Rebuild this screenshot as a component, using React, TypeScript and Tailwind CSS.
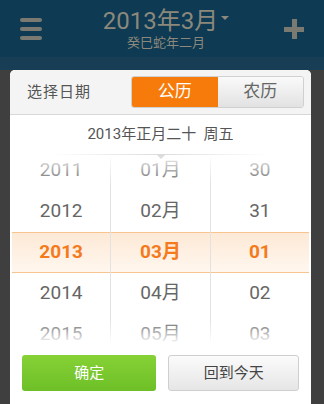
import React from "react";

const FONT = { fontFamily: "Roboto, 'Noto Sans CJK SC', sans-serif" };

const years = ["2011", "2012", "2013", "2014", "2015"];
const months = ["01月", "02月", "03月", "04月", "05月"];
const days = ["30", "31", "01", "02", "03"];

function Column({ items, last }: { items: string[]; last?: boolean }) {
  return (
    <div className={`relative flex flex-1 flex-col ${last ? "" : "border-r border-[#e2e2e2]"}`}>
      {items.map((t, i) => (
        <div
          key={t}
          className={`flex h-[41px] items-center justify-center text-[19px] ${
            i === 2 ? "font-bold text-[#f47a1b]" : "text-[#666]"
          }`}
        >
          {t}
        </div>
      ))}
    </div>
  );
}

export default function App() {
  return (
    <div className="relative h-[404px] w-[324px] overflow-hidden bg-[#3f3f3f]" style={FONT}>
      {/* dimmed app header */}
      <div className="flex h-[57px] items-center justify-between bg-[#0e3a53] px-[20px]">
        <div className="flex w-[22px] flex-col gap-[5px]">
          <span className="h-[4px] rounded-sm bg-[#7b7a72]" />
          <span className="h-[4px] rounded-sm bg-[#7b7a72]" />
          <span className="h-[4px] rounded-sm bg-[#7b7a72]" />
        </div>
        <div className="flex flex-col items-center pl-[6px] text-[#8b887c]">
          <div className="flex items-center text-[24px] leading-[28px]">
            2013年3月
            <span className="ml-[3px] mt-[-6px] h-0 w-0 border-x-[4px] border-t-[4px] border-x-transparent border-t-[#8b887c]" />
          </div>
          <div className="text-[13px] leading-[16px]">癸巳蛇年二月</div>
        </div>
        <div className="relative h-[20px] w-[20px]">
          <span className="absolute left-0 top-[8px] h-[5px] w-[20px] bg-[#7b7a72]" />
          <span className="absolute left-[8px] top-0 h-[20px] w-[5px] bg-[#7b7a72]" />
        </div>
      </div>
      <div className="h-[13px] bg-[#173e54]" />

      {/* dialog */}
      <div className="absolute left-[10px] top-[70px] h-[340px] w-[301px] overflow-hidden rounded-t-[5px] bg-white">
        <div className="flex h-[45px] items-center border-b border-[#d8d8d8] bg-[#f4f4f4] pl-[17px] pr-[7px]">
          <span className="text-[15px] tracking-[1px] text-[#555]">选择日期</span>
          <div className="ml-auto flex h-[32px] w-[173px] overflow-hidden rounded-[3px] border border-[#d0d0d0]">
            <div className="flex flex-1 items-center justify-center bg-[#f77b0a] text-[17px] text-white">公历</div>
            <div className="flex flex-1 items-center justify-center bg-gradient-to-b from-[#fafafa] to-[#e2e2e2] text-[17px] text-[#666]">
              农历
            </div>
          </div>
        </div>
        <div className="flex h-[39px] items-center justify-center text-[15px] text-[#555]">
          2013年正月二十&nbsp;&nbsp;周五
        </div>

        <div className="relative h-[190px] overflow-hidden px-[2px]">
          <div className="relative mt-[-4px]">
            <div className="absolute inset-x-0 top-[82px] h-[41px] border-y border-[#f8c48f] bg-gradient-to-b from-[#fde9d6] to-[#fff7ef]" />
            <div className="relative flex">
              <Column items={years} />
              <Column items={months} />
              <Column items={days} last />
            </div>
          </div>
          <div className="pointer-events-none absolute inset-x-0 top-0 h-[30px] bg-gradient-to-b from-white to-transparent" />
          <div className="pointer-events-none absolute inset-x-0 bottom-0 h-[24px] bg-gradient-to-t from-white to-transparent" />
          <div className="absolute left-[40px] top-0 h-px w-[220px] bg-gradient-to-r from-transparent via-[#dcdcdc] to-transparent">
            <span className="absolute left-[106px] top-0 h-0 w-0 border-x-[5px] border-t-[5px] border-x-transparent border-t-[#dcdcdc]" />
          </div>
        </div>

        <div className="flex gap-[12px] px-[12px] pt-[11px]">
          <button className="flex h-[36px] w-[135px] items-center justify-center rounded-[3px] bg-gradient-to-b from-[#86d236] to-[#6ebf27] text-[15px] text-white">
            确定
          </button>
          <button className="flex h-[36px] w-[131px] items-center justify-center rounded-[3px] border border-[#cfcfcf] bg-gradient-to-b from-[#fbfbfb] to-[#e6e6e6] text-[15px] text-[#444]">
            回到今天
          </button>
        </div>
      </div>
    </div>
  );
}
